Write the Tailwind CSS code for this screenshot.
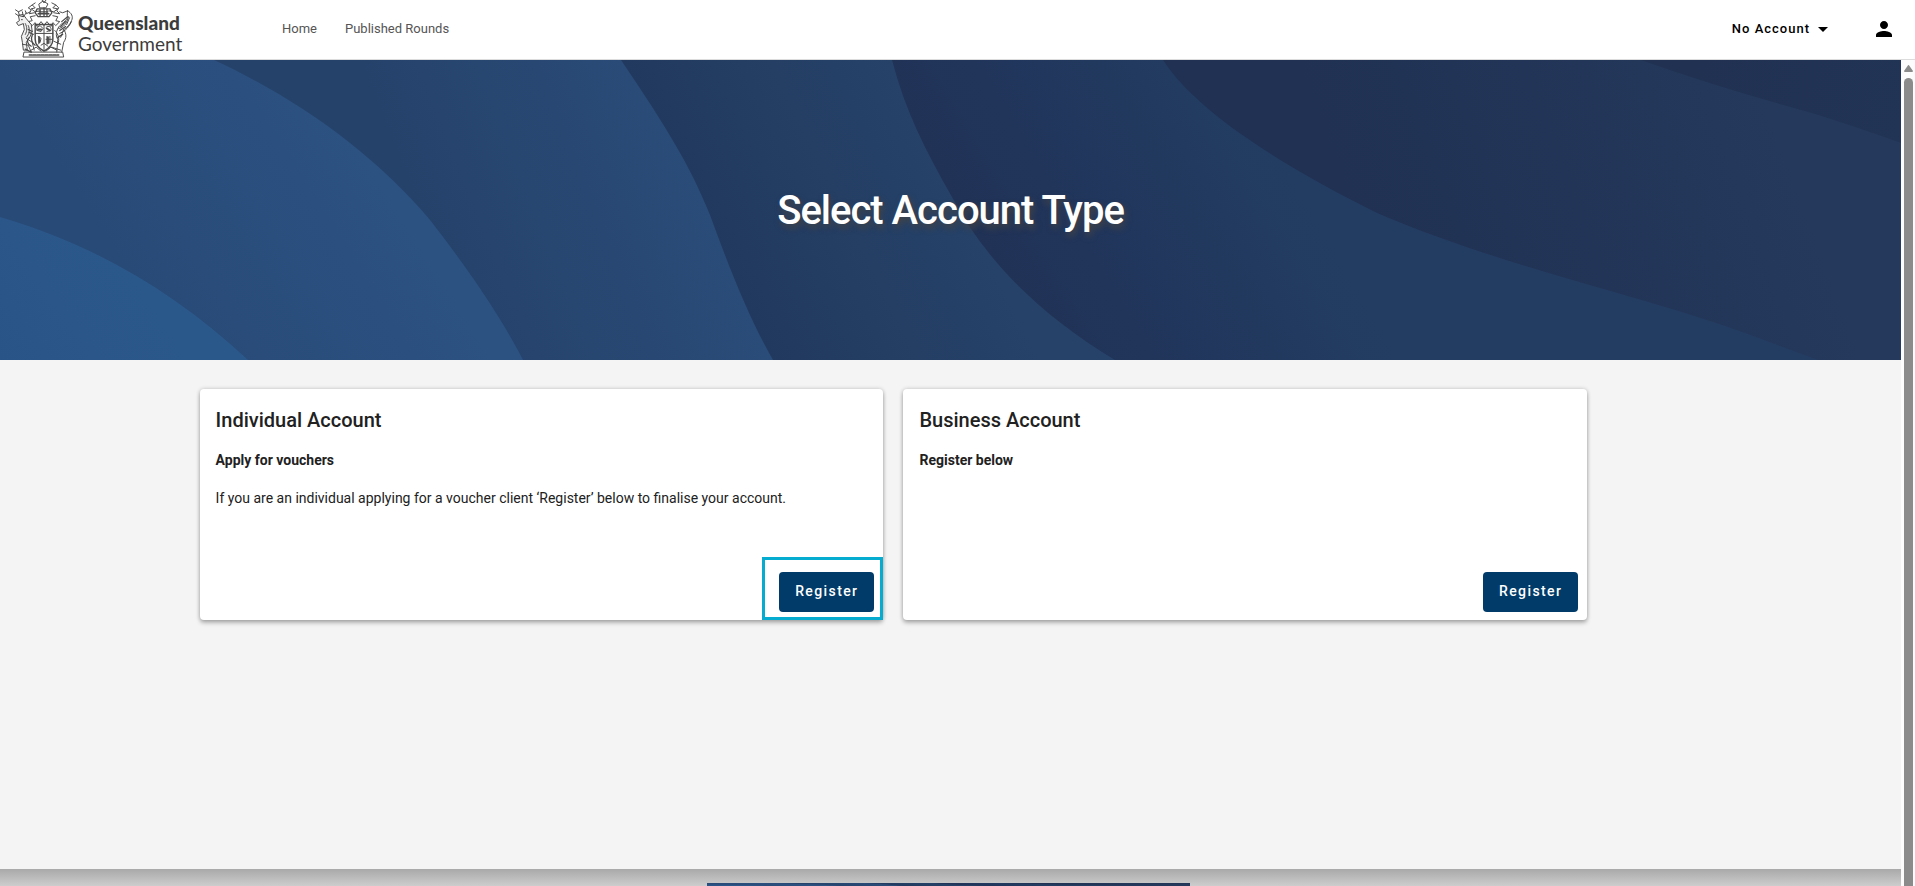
<!DOCTYPE html>
<html lang="en">
<head>
  <meta charset="UTF-8">
  <meta name="viewport" content="width=device-width, initial-scale=1.0">
  <title>Select Account Type</title>
  <script src="https://cdn.jsdelivr.net/npm/@tailwindcss/browser@4"></script>
</head>
<body class="h-screen flex flex-col overflow-hidden bg-[#f4f4f4] font-[Roboto,sans-serif] text-sm text-[#212121]">
  <!-- Navbar -->
  <header class="flex h-[60px] shrink-0 items-center justify-between border-b border-[#dcdcdc] bg-white pb-px pl-[15px] pr-[19px]">
    <div class="flex items-center">
      <a href="/" class="flex w-[267px] items-center gap-1 text-[#3c3c3c]">
        <!-- Coat of arms -->
        <svg class="h-[58px] w-[59px]" viewBox="0 0 59 59" fill="none" stroke="#4a4a4a" stroke-width="1" stroke-linejoin="round" stroke-linecap="round" aria-hidden="true">
          <path d="M27 0l2 3 2-3M24 4l4-3 5 3-2 4h-6zM20 3l-3 2 3 3-4 1 4 3 5-1M17 5l-4 3 3 2-2 4 5-1M37 3l4 2-3 3 5 1-4 3-5-1M41 5l3 3-2 3 3 3-6-1"/>
          <path d="M22 9h13l2 4-3 4H23l-3-4zM24 12h9M23 14h11M25 9v8M29 8v9M32 9v8" stroke-width="1.3"/>
          <path d="M20 16l-5 1 2 4-4 1 4 4 3-3 2 4 4-5 3 4 3-4 4 5 2-4 3 3 4-4-4-1 2-4-5-1"/>
          <path d="M20 25h18v15c0 7-5 10-9 12-4-2-9-5-9-12z" stroke-width="1.5"/>
          <path d="M20 34h18M29 25v27M22 28l3-2 3 3-2 3-4-1zM31 28c3-3 6 0 5 3l-4 1M23 37l3 2-1 4-2 2M32 37v8M35 37v7M31 40h6M26 46l3-2 4 3"/>
          <path d="M23 30h3M32 29l3 2M24 38v5M33 38v6" stroke-width="2"/>
          <!-- Red deer -->
          <path fill="#f1f1f1" d="M3 16l1 5-3 2 2 3 5-2 1 6-3 7 1 6 1 8h4l-1-8 4-6 2-5-1-7-5-6-3-4z"/>
          <path d="M3 12l1 4 4 1-1-5M8 17l3-4M3 16l-3-2M0 10l3 2 4-2M10 11l1 3 4-2M6 20h1M10 24c2 4 2 7 0 11M13 26c2 4 1 9-2 12M7 45l6 1 3 7M11 39l6 4 2 8"/>
          <path d="M14 38c-3 3-2 7 2 9M17 36c-2 4 0 8 3 10M10 50l6 3M13 30l4 2M14 33l4 2" stroke-width="1.3"/>
          <!-- Brolga -->
          <path d="M53 11c4 2 6 6 4 10s-4 7-8 9c3 4 3 9 0 13l-2 10M53 11l-5 2-3-1M53 11c-1 5 1 7-2 10s-6 4-8 8-2 8 0 11l-1 13M44 29c5-1 8-5 10-12M45 34c4-2 8-4 12-12M55 18l-3 7M49 30l-3 8M40 31c4 4 5 9 3 14M39 42l7 3M37 48l9 3"/>
          <path d="M46 27l5-5M45 31l6-4M47 22l6-5M43 38l5-3" stroke-width="1.3"/>
          <!-- Motto scroll -->
          <path d="M9 53h39l1 5H8zM16 51l5-3 5 4M42 51l-6-3-5 4"/>
          <path d="M14 56h30" stroke-dasharray="3 1" stroke-width="1.5"/>
        </svg>
        <span class="flex flex-col pt-2 font-[Lato,sans-serif] text-[19px] leading-[21px]">
          <span class="font-black">Queensland</span>
          <span>Government</span>
        </span>
      </a>
      <nav class="flex gap-7 text-[13px] text-[#555]">
        <a href="/home">Home</a>
        <a href="/rounds">Published Rounds</a>
      </nav>
    </div>
    <div class="flex items-center gap-11 text-black">
      <button class="flex items-center gap-2 text-[13px] font-medium tracking-[1px]">
        No Account
        <svg class="h-[5px] w-[10px]" viewBox="0 0 10 5" aria-hidden="true"><path d="M0 0h10L5 5z"/></svg>
      </button>
      <button aria-label="Profile">
        <svg class="size-6" viewBox="0 0 24 24" aria-hidden="true"><path d="M12 12c2.2 0 4-1.8 4-4s-1.8-4-4-4-4 1.8-4 4 1.8 4 4 4zm0 2c-2.7 0-8 1.300-8 4v2h16v-2c0-2.700-5.300-4-8-4z"/></svg>
      </button>
    </div>
  </header>

  <div class="flex min-h-0 flex-1">
    <main class="flex min-w-0 flex-1 flex-col">
      <!-- Banner -->
      <section class="relative flex h-[300px] shrink-0 items-center justify-center overflow-hidden pt-0.5">
        <svg class="absolute inset-0 h-full w-full" viewBox="0 0 1901 300" preserveAspectRatio="none" aria-hidden="true">
          <defs>
            <linearGradient id="f" gradientUnits="userSpaceOnUse" x1="1700" y1="0" x2="1901" y2="80"><stop stop-color="#203152"/><stop offset="1" stop-color="#223456"/></linearGradient>
            <linearGradient id="e" gradientUnits="userSpaceOnUse" x1="1350" y1="150" x2="1750" y2="0"><stop stop-color="#203153"/><stop offset="1" stop-color="#24395c"/></linearGradient>
            <linearGradient id="d" gradientUnits="userSpaceOnUse" x1="980" y1="230" x2="1260" y2="60"><stop stop-color="#203154"/><stop offset=".35" stop-color="#21355b"/><stop offset="1" stop-color="#233d62"/></linearGradient>
            <linearGradient id="c" gradientUnits="userSpaceOnUse" x1="690" y1="200" x2="930" y2="80"><stop stop-color="#21385e"/><stop offset="1" stop-color="#264268"/></linearGradient>
            <linearGradient id="b" gradientUnits="userSpaceOnUse" x1="440" y1="200" x2="690" y2="100"><stop stop-color="#25426b"/><stop offset="1" stop-color="#2a4c78"/></linearGradient>
            <linearGradient id="a" gradientUnits="userSpaceOnUse" x1="120" y1="200" x2="340" y2="60"><stop stop-color="#284a77"/><stop offset="1" stop-color="#2c5282"/></linearGradient>
            <linearGradient id="z" gradientUnits="userSpaceOnUse" x1="0" y1="300" x2="130" y2="210"><stop stop-color="#295488"/><stop offset="1" stop-color="#2b588b"/></linearGradient>
          </defs>
          <g id="waves">
            <path fill="url(#f)" d="M0 0h1901v300H0z"/>
            <path fill="url(#e)" d="M0 0h1641Q1720 28 1812 53 1860 68 1901 83V300H0z"/>
            <path fill="url(#d)" d="M0 0h1163C1195 50 1280 105 1377 153 1500 206 1640 235 1745 273L1818 300H0z"/>
            <path fill="url(#c)" d="M0 0h892C905 50 925 90 952 137 985 200 1040 255 1115 300H0z"/>
            <path fill="url(#b)" d="M0 0h621C665 65 690 105 710 155 730 210 750 260 773 300H0z"/>
            <path fill="url(#a)" d="M0 0h214C300 40 375 95 430 160 465 205 500 255 523 300H0z"/>
            <path fill="url(#z)" d="M0 157C95 185 175 232 248 300H0z"/>
          </g>
        </svg>
        <h1 class="relative text-[40px] leading-[48px] font-medium tracking-tight text-white [text-shadow:2px_4px_6px_#444]">Select Account Type</h1>
      </section>

      <!-- Account cards -->
      <section class="grid flex-1 grid-cols-2 content-start gap-5 pt-[29px] pr-[16.5%] pl-[10.5%]">
        <article class="flex h-[231px] flex-col justify-between rounded bg-white shadow-[0_3px_4px_rgba(0,0,0,0.25),0_0_4px_rgba(0,0,0,0.2)]">
          <div class="px-4 pt-[15px]">
            <h2 class="text-[20px] leading-8 font-medium">Individual Account</h2>
            <h3 class="mt-3 leading-6 font-bold">Apply for vouchers</h3>
            <p class="mt-[14px] leading-6">If you are an individual applying for a voucher client ‘Register’ below to finalise your account.</p>
          </div>
          <div class="self-end border-[3px] border-[#06abd0] py-[5px] pt-3 pr-[6px] pl-[14px]">
            <button class="block h-10 rounded bg-[#003b69] px-4 pb-0.5 font-medium tracking-widest text-white">Register</button>
          </div>
        </article>
        <article class="flex h-[231px] flex-col justify-between rounded bg-white shadow-[0_3px_4px_rgba(0,0,0,0.25),0_0_4px_rgba(0,0,0,0.2)]">
          <div class="px-4 pt-[15px]">
            <h2 class="text-[20px] leading-8 font-medium">Business Account</h2>
            <h3 class="mt-3 leading-6 font-bold">Register below</h3>
          </div>
          <div class="self-end p-2 pr-[9px]">
            <button class="block h-10 rounded bg-[#003b69] px-4 pb-0.5 font-medium tracking-widest text-white">Register</button>
          </div>
        </article>
      </section>

      <!-- Footer -->
      <footer class="flex h-[17px] shrink-0 items-end justify-center bg-linear-to-b from-[#a9a9a9] to-[#cdcdcd] pr-1">
        <svg class="h-[3px] w-[483px]" viewBox="0 0 1901 300" preserveAspectRatio="none" aria-hidden="true"><use href="#waves"/></svg>
      </footer>
    </main>

    <!-- Scroll track -->
    <div class="flex w-[14px] flex-col items-center gap-[6px] bg-[#fcfcfc] pt-[5px]" aria-hidden="true">
      <svg class="h-[7px] w-[9px] shrink-0" viewBox="0 0 9 7"><path fill="#8b8b8b" d="M3.500 1q1-2 2 0L9 6q0 1-1 1H1Q0 7 0 6z"/></svg>
      <div class="w-[9px] flex-1 rounded-t-full bg-[#8b8b8b]"></div>
    </div>
  </div>
</body>
</html>
